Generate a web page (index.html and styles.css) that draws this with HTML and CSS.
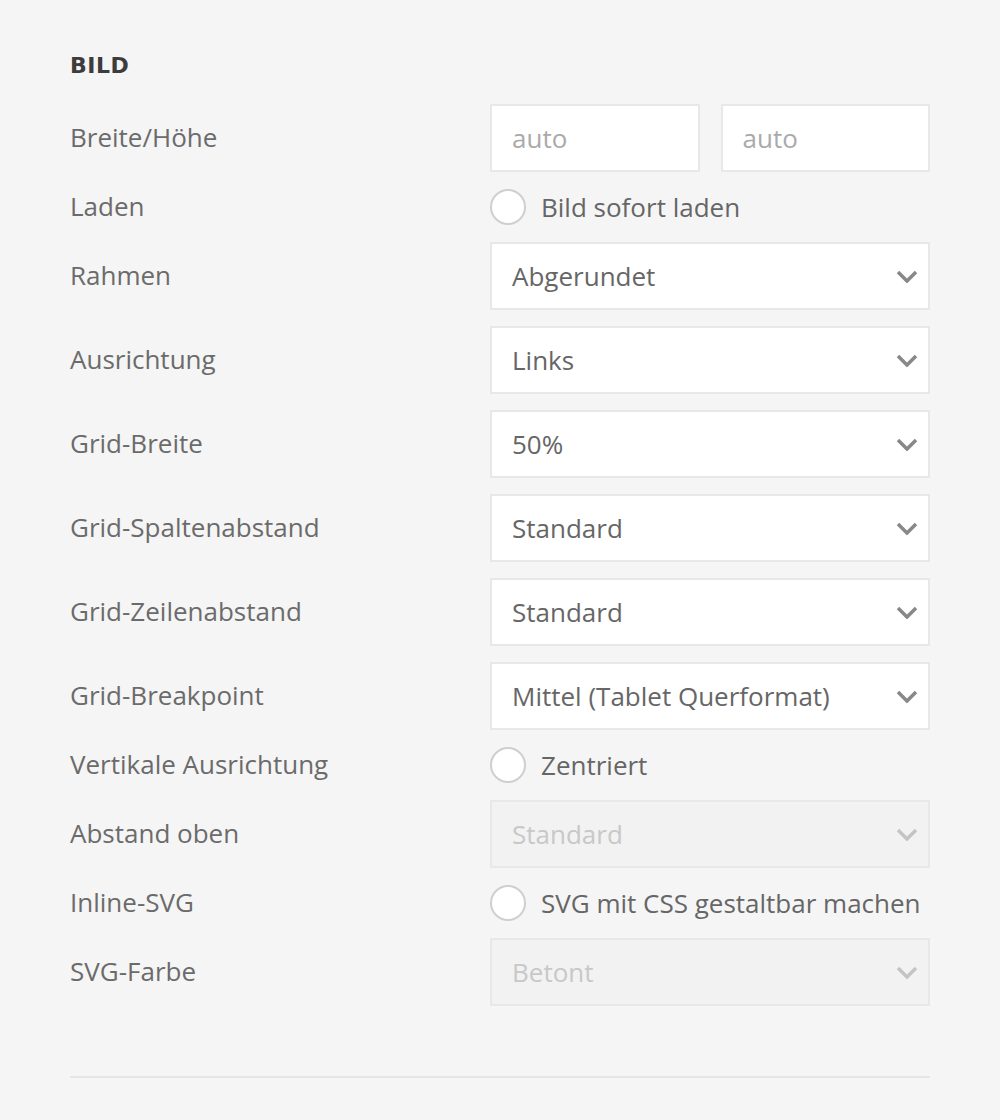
FILE: index.html
```html
<!DOCTYPE html>
<html lang="de">
<head>
  <meta charset="UTF-8" />
  <meta name="viewport" content="width=device-width, initial-scale=1.0"/>
  <title>Bild</title>
  <link rel="stylesheet" href="styles.css">
</head>
<body>

  <section class="panel">
    <h3 class="panel-title">Bild</h3>

    <div class="fields">
      <label class="field-label">Breite/Höhe</label>
      <div class="pair">
        <input type="text" class="text-input" placeholder="auto" />
        <input type="text" class="text-input" placeholder="auto" />
      </div>

      <label class="field-label">Laden</label>
      <div class="check-row"><span class="radio"></span>Bild sofort laden</div>

      <label class="field-label">Rahmen</label>
      <div class="select"><span>Abgerundet</span><svg class="chevron" viewBox="0 0 22 13"><polyline points="2,2 11,11 20,2"/></svg></div>

      <label class="field-label">Ausrichtung</label>
      <div class="select"><span>Links</span><svg class="chevron" viewBox="0 0 22 13"><polyline points="2,2 11,11 20,2"/></svg></div>

      <label class="field-label">Grid-Breite</label>
      <div class="select"><span>50%</span><svg class="chevron" viewBox="0 0 22 13"><polyline points="2,2 11,11 20,2"/></svg></div>

      <label class="field-label">Grid-Spaltenabstand</label>
      <div class="select"><span>Standard</span><svg class="chevron" viewBox="0 0 22 13"><polyline points="2,2 11,11 20,2"/></svg></div>

      <label class="field-label">Grid-Zeilenabstand</label>
      <div class="select"><span>Standard</span><svg class="chevron" viewBox="0 0 22 13"><polyline points="2,2 11,11 20,2"/></svg></div>

      <label class="field-label">Grid-Breakpoint</label>
      <div class="select"><span>Mittel (Tablet Querformat)</span><svg class="chevron" viewBox="0 0 22 13"><polyline points="2,2 11,11 20,2"/></svg></div>

      <label class="field-label">Vertikale Ausrichtung</label>
      <div class="check-row"><span class="radio"></span>Zentriert</div>

      <label class="field-label">Abstand oben</label>
      <div class="select disabled"><span>Standard</span><svg class="chevron" viewBox="0 0 22 13"><polyline points="2,2 11,11 20,2"/></svg></div>

      <label class="field-label">Inline-SVG</label>
      <div class="check-row"><span class="radio"></span>SVG mit CSS gestaltbar machen</div>

      <label class="field-label">SVG-Farbe</label>
      <div class="select disabled"><span>Betont</span><svg class="chevron" viewBox="0 0 22 13"><polyline points="2,2 11,11 20,2"/></svg></div>
    </div>

    <hr class="divider">
  </section>

</body>
</html>
```

FILE: styles.css
```css
* { margin: 0; padding: 0; box-sizing: border-box; }

body {
  background: #f5f5f5;
  color: #666;
  font-family: 'Open Sans', sans-serif;
  font-size: 26px;
}

.panel {
  padding: 50px 70px 0;
}

.panel-title {
  font-family: 'DejaVu Sans', sans-serif;
  font-size: 22px;
  font-weight: 700;
  line-height: 32px;
  letter-spacing: 0.5px;
  text-transform: uppercase;
  color: #3c3c3c;
  margin-bottom: 22px;
}

.fields {
  display: grid;
  grid-template-columns: 420px 440px;
  row-gap: 16px;
  align-items: center;
}

.field-label {
  line-height: 34px;
  padding-bottom: 3px;
  color: #6b6b6b;
}

.pair {
  display: grid;
  grid-template-columns: 1fr 1fr;
  gap: 21px;
}

.text-input {
  height: 68px;
  width: 100%;
  padding: 0 20px;
  border: 2px solid #e8e8e8;
  background: #fff;
  font-family: 'Open Sans', sans-serif;
  font-size: 26px;
  color: #666;
  outline: none;
}

.text-input::placeholder { color: #aaa; }

.check-row {
  display: flex;
  align-items: center;
  gap: 15px;
  height: 38px;
  line-height: 38px;
  color: #666;
}

.radio {
  width: 36px;
  height: 36px;
  border: 2px solid #cfcfcf;
  border-radius: 50%;
  background: #fff;
  flex-shrink: 0;
}

.select {
  display: flex;
  align-items: center;
  justify-content: space-between;
  height: 68px;
  padding: 0 10px 0 20px;
  border: 2px solid #e8e8e8;
  background: #fff;
  color: #666;
}

.chevron {
  width: 22px;
  height: 13px;
  fill: none;
  stroke: #888;
  stroke-width: 3.5;
}

.select.disabled {
  background: #f2f2f2;
  color: #c8c8c8;
}

.select.disabled .chevron { stroke: #c4c4c4; }

.divider {
  border: none;
  border-top: 2px solid #e6e6e6;
  margin-top: 70px;
}
```
